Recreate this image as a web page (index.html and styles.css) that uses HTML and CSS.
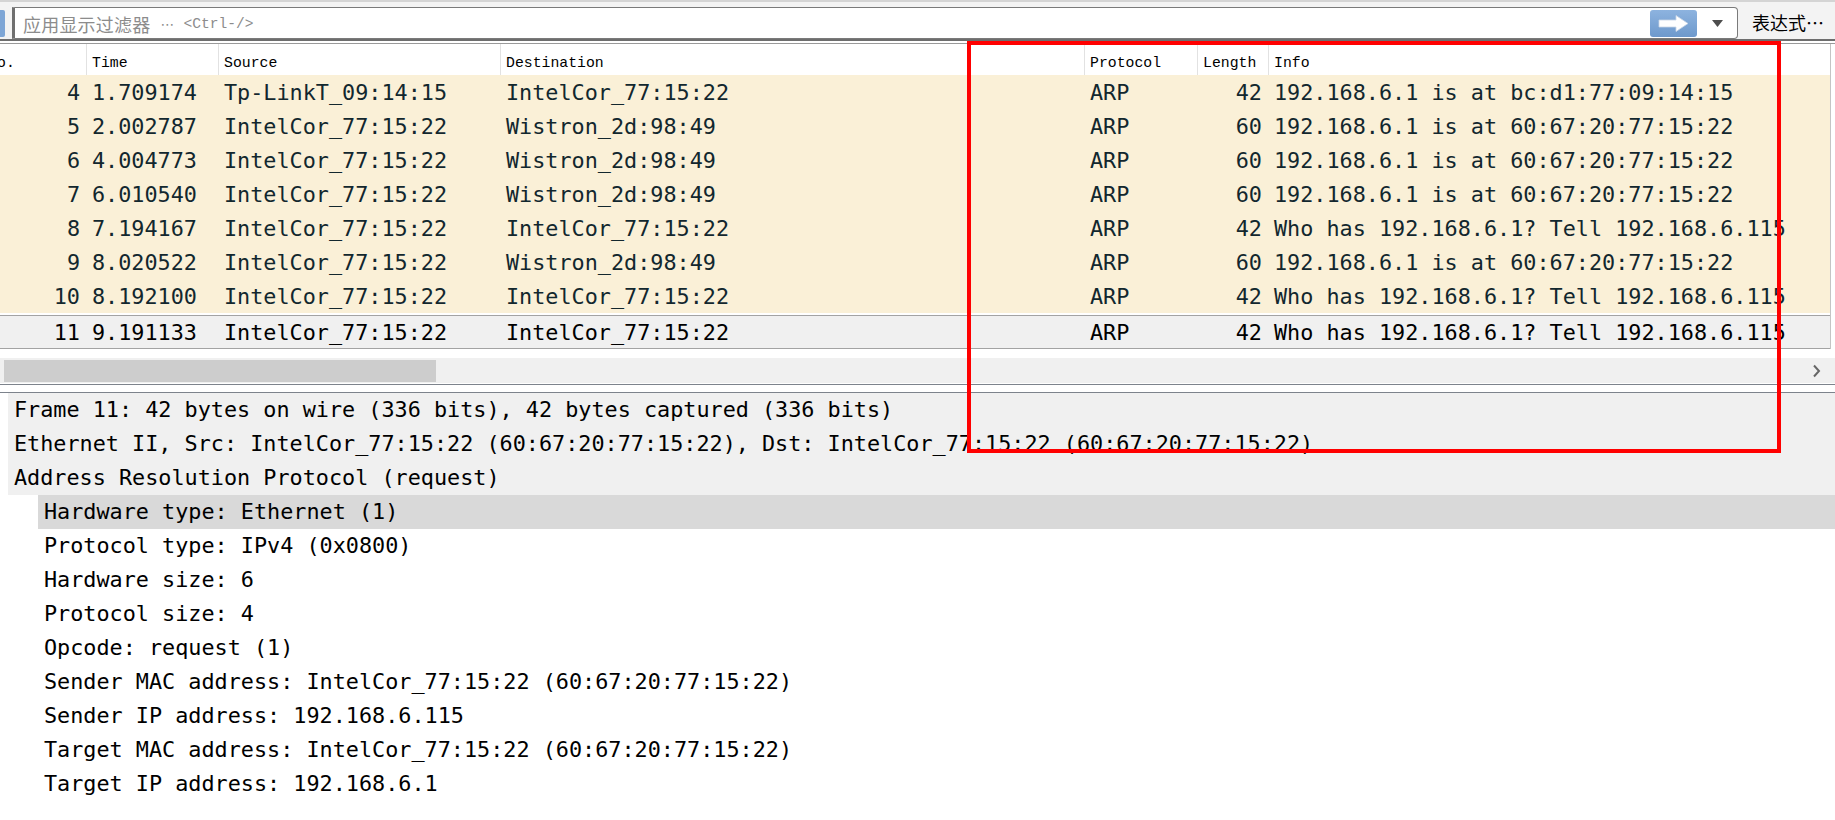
FILE: index.html
```html
<!DOCTYPE html>
<html lang="zh">
<head>
<meta charset="utf-8">
<title>Wireshark</title>
<link rel="stylesheet" href="styles.css">
</head>
<body>
<div class="app">
  <div class="toolbar">
    <div class="bookmark"></div>
    <div class="filter">
      <div class="placeholder"><span class="cjk">应用显示过滤器</span><span class="dots">⋯</span><span class="hint">&lt;Ctrl-/&gt;</span></div>
      <div class="apply">
        <svg width="47" height="27" viewBox="0 0 47 27">
          <defs>
            <linearGradient id="g" x1="0" y1="0" x2="0" y2="1">
              <stop offset="0" stop-color="#8db3df"/>
              <stop offset="1" stop-color="#6e99cc"/>
            </linearGradient>
          </defs>
          <rect x="0" y="0" width="47" height="27" rx="3" fill="url(#g)"/>
          <path d="M9 10 H26 V5.5 L38 13.5 L26 21.5 V17 H9 Z" fill="#ffffff" stroke="#c9d6e6" stroke-width="0.8"/>
        </svg>
      </div>
      <div class="dropdown">
        <svg width="11" height="7" viewBox="0 0 11 7"><path d="M0 0 H11 L5.5 7 Z" fill="#4d4d4d"/></svg>
      </div>
    </div>
    <div class="expr">表达式⋯</div>
  </div>
  <div class="sep"></div>

  <div class="plist">
    <div class="pgrid">
      <div class="prow phead">
        <div class="c no hd">o.</div>
        <div class="c hd">Time</div>
        <div class="c hd">Source</div>
        <div class="c hd">Destination</div>
        <div class="c hd">Protocol</div>
        <div class="c hd">Length</div>
        <div class="c hd">Info</div>
      </div>
      <div class="prow arp"><div class="c no">4</div><div class="c">1.709174</div><div class="c">Tp-LinkT_09:14:15</div><div class="c">IntelCor_77:15:22</div><div class="c">ARP</div><div class="c len">42</div><div class="c">192.168.6.1 is at bc:d1:77:09:14:15</div></div>
      <div class="prow arp"><div class="c no">5</div><div class="c">2.002787</div><div class="c">IntelCor_77:15:22</div><div class="c">Wistron_2d:98:49</div><div class="c">ARP</div><div class="c len">60</div><div class="c">192.168.6.1 is at 60:67:20:77:15:22</div></div>
      <div class="prow arp"><div class="c no">6</div><div class="c">4.004773</div><div class="c">IntelCor_77:15:22</div><div class="c">Wistron_2d:98:49</div><div class="c">ARP</div><div class="c len">60</div><div class="c">192.168.6.1 is at 60:67:20:77:15:22</div></div>
      <div class="prow arp"><div class="c no">7</div><div class="c">6.010540</div><div class="c">IntelCor_77:15:22</div><div class="c">Wistron_2d:98:49</div><div class="c">ARP</div><div class="c len">60</div><div class="c">192.168.6.1 is at 60:67:20:77:15:22</div></div>
      <div class="prow arp"><div class="c no">8</div><div class="c">7.194167</div><div class="c">IntelCor_77:15:22</div><div class="c">IntelCor_77:15:22</div><div class="c">ARP</div><div class="c len">42</div><div class="c">Who has 192.168.6.1? Tell 192.168.6.115</div></div>
      <div class="prow arp"><div class="c no">9</div><div class="c">8.020522</div><div class="c">IntelCor_77:15:22</div><div class="c">Wistron_2d:98:49</div><div class="c">ARP</div><div class="c len">60</div><div class="c">192.168.6.1 is at 60:67:20:77:15:22</div></div>
      <div class="prow arp"><div class="c no">10</div><div class="c">8.192100</div><div class="c">IntelCor_77:15:22</div><div class="c">IntelCor_77:15:22</div><div class="c">ARP</div><div class="c len">42</div><div class="c">Who has 192.168.6.1? Tell 192.168.6.115</div></div>
      <div class="prow sel"><div class="c no">11</div><div class="c">9.191133</div><div class="c">IntelCor_77:15:22</div><div class="c">IntelCor_77:15:22</div><div class="c">ARP</div><div class="c len">42</div><div class="c">Who has 192.168.6.1? Tell 192.168.6.115</div></div>
    </div>
    <div class="gap"></div>
    <div class="hscroll">
      <div class="thumb"></div>
      <div class="arrow">
        <svg width="9" height="14" viewBox="0 0 9 14"><path d="M2 1.5 L7 7 L2 12.5" fill="none" stroke="#666666" stroke-width="2"/></svg>
      </div>
    </div>
  </div>

  <div class="splitter"></div>

  <div class="details">
    <div class="drow top">Frame 11: 42 bytes on wire (336 bits), 42 bytes captured (336 bits)</div>
    <div class="drow top">Ethernet II, Src: IntelCor_77:15:22 (60:67:20:77:15:22), Dst: IntelCor_77:15:22 (60:67:20:77:15:22)</div>
    <div class="drow top">Address Resolution Protocol (request)</div>
    <div class="drow child cur">Hardware type: Ethernet (1)</div>
    <div class="drow child">Protocol type: IPv4 (0x0800)</div>
    <div class="drow child">Hardware size: 6</div>
    <div class="drow child">Protocol size: 4</div>
    <div class="drow child">Opcode: request (1)</div>
    <div class="drow child">Sender MAC address: IntelCor_77:15:22 (60:67:20:77:15:22)</div>
    <div class="drow child">Sender IP address: 192.168.6.115</div>
    <div class="drow child">Target MAC address: IntelCor_77:15:22 (60:67:20:77:15:22)</div>
    <div class="drow child">Target IP address: 192.168.6.1</div>
  </div>

  <div class="annot"></div>
</div>
</body>
</html>
```

FILE: styles.css
```css
html, body {
  margin: 0;
  padding: 0;
  background: #ffffff;
}
body {
  width: 1835px;
  height: 820px;
  overflow: hidden;
}
.app {
  position: relative;
  width: 1835px;
  height: 820px;
  font-family: "DejaVu Sans Mono", monospace;
}

/* toolbar */
.toolbar {
  height: 37px;
  border-top: 2px solid #d4d4d4;
  background: #f3f3f3;
  display: flex;
  align-items: flex-start;
}
.bookmark {
  width: 5px;
  height: 27px;
  margin-top: 8px;
  background: #7ea6d6;
  border-radius: 0 2px 2px 0;
}
.filter {
  margin-left: 7px;
  margin-top: 5px;
  width: 1726px;
  height: 32px;
  box-sizing: border-box;
  background: #ffffff;
  border: 1px solid #7a7a7a;
  border-left: 3px solid #6f6f6f;
  border-radius: 0 4px 4px 0;
  display: flex;
  align-items: center;
}
.placeholder {
  flex: 1;
  padding-left: 8px;
  padding-top: 1px;
  color: #8c8c8c;
  display: flex;
  align-items: center;
  white-space: nowrap;
}
.cjk {
  font-family: "Noto Sans CJK SC", sans-serif;
  font-size: 18px;
  letter-spacing: 0.2px;
}
.dots {
  font-family: "DejaVu Sans", sans-serif;
  font-size: 14px;
  margin-left: 10px;
  margin-right: 9px;
}
.hint {
  font-family: "Liberation Mono", monospace;
  font-size: 14.6px;
}
.apply {
  width: 47px;
  height: 27px;
  display: flex;
}
.dropdown {
  width: 40px;
  display: flex;
  justify-content: center;
  align-items: center;
}
.expr {
  margin-left: 14px;
  margin-top: 7px;
  font-family: "Noto Sans CJK SC", sans-serif;
  font-size: 18px;
  color: #000000;
  white-space: nowrap;
}
.sep {
  height: 2px;
  border-top: 2px solid #6e6e6e;
  border-bottom: 1px solid #9a9a9a;
  background: #ffffff;
}

/* packet list */
.plist {
  width: 1835px;
}
.pgrid {
  width: 1830px;
  border-right: 1px solid #c4c4c4;
  background: #ffffff;
}
.prow {
  display: grid;
  grid-template-columns: 86px 132px 282px 584px 113px 71px 1fr;
  height: 34px;
  align-items: center;
  color: #12272e;
  font-size: 21.8px;
  white-space: nowrap;
}
.prow .c {
  padding-left: 6px;
}
.prow .no, .prow .len {
  text-align: right;
  padding-left: 0;
  padding-right: 6px;
}
.phead {
  height: 31px;
  align-items: stretch;
  background: #ffffff;
  color: #000000;
  font-family: "Liberation Mono", monospace;
  font-size: 14.8px;
}
.phead .hd {
  display: flex;
  align-items: center;
  box-sizing: border-box;
  padding-top: 6px;
  border-left: 1px solid #e2e2e2;
  padding-left: 5px;
}
.phead .no {
  border-left: none;
  justify-content: flex-start;
  padding-left: 0;
  text-indent: -3px;
}
.arp {
  background: #faf0d7;
}
.sel {
  margin-top: 2px;
  background: #f0f0f0;
  color: #000000;
  box-sizing: border-box;
  border-top: 1px solid #a3a3a3;
  border-bottom: 1px solid #a3a3a3;
}
.gap {
  height: 9px;
}
.hscroll {
  height: 25px;
  background: #f0f0f0;
  display: flex;
  align-items: center;
  justify-content: space-between;
}
.thumb {
  width: 432px;
  height: 22px;
  margin-left: 4px;
  background: #cdcdcd;
}
.arrow {
  display: flex;
  margin-right: 14px;
}

.splitter {
  margin-top: 1px;
  height: 7px;
  border-top: 1px solid #7d838c;
  border-bottom: 1px solid #7d838c;
  background: #ffffff;
}

/* details */
.details {
  font-size: 21.8px;
  color: #000000;
}
.drow {
  height: 34px;
  line-height: 34px;
  white-space: nowrap;
}
.drow.top {
  margin-left: 8px;
  padding-left: 6px;
  background: #f0f0f0;
}
.drow.child {
  margin-left: 38px;
  padding-left: 6px;
}
.drow.cur {
  background: #d9d9d9;
}

/* red annotation rectangle drawn over the screenshot */
.annot {
  position: absolute;
  left: 967px;
  top: 41px;
  width: 806px;
  height: 404px;
  border: 4px solid #ff0000;
  pointer-events: none;
}
```
